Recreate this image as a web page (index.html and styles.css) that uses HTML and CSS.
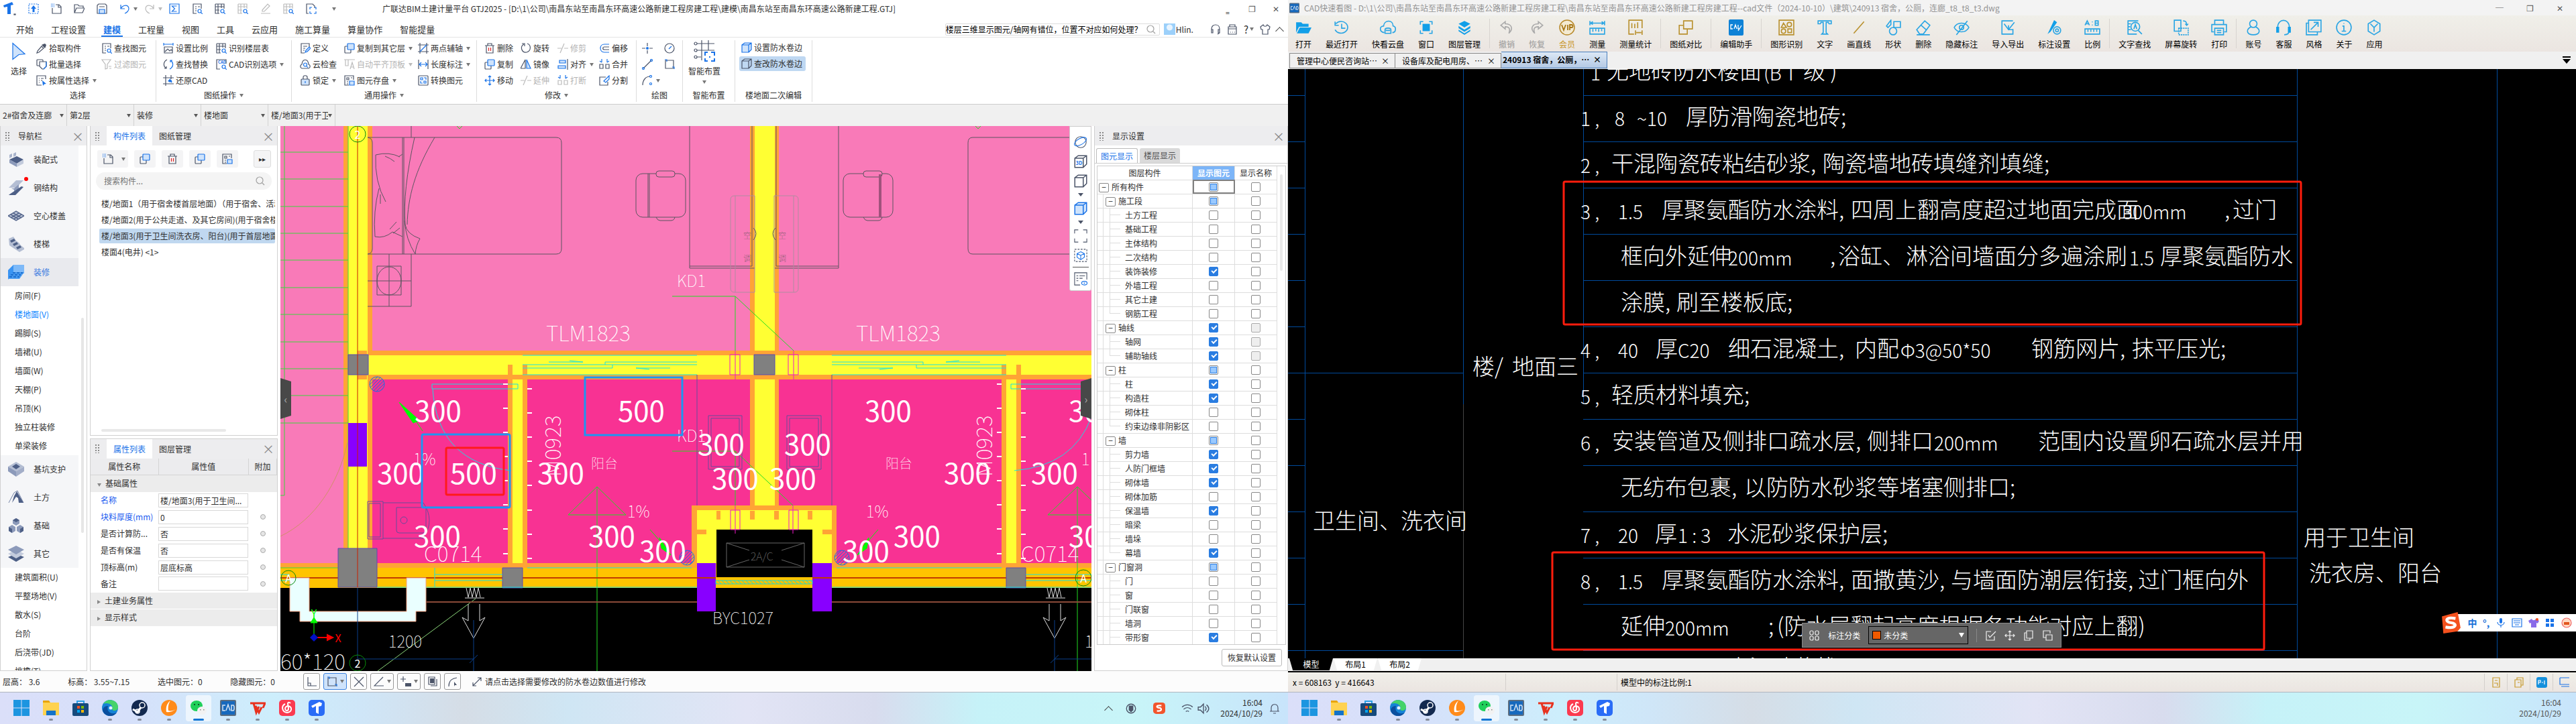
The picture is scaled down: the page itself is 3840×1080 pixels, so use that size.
FILE: index.html
```html
<!DOCTYPE html>
<html lang="zh-CN">
<head>
<meta charset="utf-8">
<title>广联达BIM土建计量平台 GTJ2025</title>
<link rel="stylesheet" href="styles.css">
</head>
<body>
<svg class="sprite" aria-hidden="true">
  <symbol id="logo" viewBox="0 0 18 20"><path class="fb" d="M0 5 13 0l2 4-4 1v13H6V7L1 8z"/><path d="M16 18h2v1h-2z"/></symbol>
  <symbol id="upload" viewBox="0 0 16 16"><path class="b" stroke-dasharray="2 1.5" d="M1 1h14v14H1z"/><path class="fb" d="M8 3l4 5H9.500v5h-3V8H4z"/></symbol>
  <symbol id="new" viewBox="0 0 16 16"><path d="M7 2h5l3 3v10H2V7M11 2v4h4"/><path class="b" stroke-dasharray="1 1" d="M0 1h5M0 3h5M0 5h5"/></symbol>
  <symbol id="open" viewBox="0 0 16 16"><path d="M1 14V2h5l2 2h6v3M1 14l3-7h12l-3 7z"/></symbol>
  <symbol id="save" viewBox="0 0 16 16"><path d="M1 3l2-2h10l2 2v12H1zM4 5h8"/><path class="b lb" d="M4 9h8v6H4z"/></symbol>
  <symbol id="undo" viewBox="0 0 16 16"><path class="b" d="M2 2v6h6M2 8c3-6 12-7 12 0 0 3-3 6-6 7"/></symbol>
  <symbol id="redo" viewBox="0 0 16 16"><path d="M14 2v6H8M14 8C11 2 2 1 2 8c0 3 3 6 6 7"/></symbol>
  <symbol id="sum" viewBox="0 0 16 16"><path class="b" d="M1 1h14v14H1zM11.500 4h-7l4 4-4 4h7"/></symbol>
  <symbol id="gridq" viewBox="0 0 16 16"><path d="M1 1h13v7M1 1v14h6M1 5h13M1 10h6M5 1v14M10 1v6"/><circle class="b" cx="11.500" cy="11.500" r="2.500"/><path class="b" d="M13.500 13.500 16 16"/></symbol>
  <symbol id="listq" viewBox="0 0 16 16"><path d="M14 8V1H2v14h5M5 5h2M5 8h2M5 11h2M9 5h3"/><circle class="b" cx="11.500" cy="11.500" r="2.500"/><path class="b" d="M13.500 13.500 16 16"/></symbol>
  <symbol id="pen" viewBox="0 0 16 16"><path d="M3 10 11 1l3 3-8 8H3zM1 15h14"/></symbol>
  <symbol id="page" viewBox="0 0 16 16"><path d="M4 15H1V1h9l3 3v3"/><path class="b" d="M6 9V6h3M13 6h2v3M15 12v3h-3M9 15H6v-3"/></symbol>
  <symbol id="pick" viewBox="0 0 16 16"><path d="M1 15l1-3 6-7 3 3-7 6z"/><path class="fd" d="M8 3l5 5 1-2 1-3-2-2-3 1z"/></symbol>
  <symbol id="batch" viewBox="0 0 16 16"><rect x="1" y="1" width="9" height="9" rx="1"/><path d="M5 4h10v7l-4 4H9l-4-4z" fill="#fff"/><path class="b" d="M15 4v7l-4 4"/></symbol>
  <symbol id="attr" viewBox="0 0 16 16"><path d="M8 15H1V1h13v5M4 5h1M7 5h4M4 8h1M7 8h2M4 11h1"/><path class="fb" d="M9 8l6 5-3 .5L10 16z"/></symbol>
  <symbol id="filter" viewBox="0 0 16 16"><path d="M1 1h13L9 8v6l-3 1V8zM11 11h4M12 14h3"/></symbol>
  <symbol id="ratio" viewBox="0 0 16 16"><path class="b" d="M1 0v4M15 0v4M1 2h14"/><path d="M2 6h12v9H2zM3 13l4-4 3 3 2-2 2 2"/></symbol>
  <symbol id="swap" viewBox="0 0 16 16"><path d="M6 1c-6 3-6 10-1 13M2 14h3v-3"/><path class="b" d="M10 15c6-3 6-10 1-13M14 2h-3v3"/></symbol>
  <symbol id="cadopt" viewBox="0 0 16 16"><path d="M6 15H1V1h14v6"/><text x="3" y="7" class="tiny">CAD</text><circle class="b" cx="11.500" cy="11.500" r="2.500"/><path class="b" d="M13.500 13.500 16 16"/></symbol>
  <symbol id="restore" viewBox="0 0 16 16"><path d="M4 0v16M0 4h16M0 13h16M12 0v6"/><path class="fb" d="M7 9l4-4v2c2 0 3 2 2 5-1-2-2-2-2-1z"/></symbol>
  <symbol id="define" viewBox="0 0 16 16"><path d="M7 15H2V1h12v5M5 5h6M5 8h3M5 11h2"/><path class="b lb" d="M8 14l1-3 5-5 2 2-5 5z"/></symbol>
  <symbol id="cloudq" viewBox="0 0 16 16"><path d="M3 14c-3-1-3-5 0-6 1-9 9-9 10 0 3 1 3 5 0 6z"/><circle class="b" cx="8" cy="8.500" r="2.500"/><path class="b" d="M10 10.500 12 13"/></symbol>
  <symbol id="lock" viewBox="0 0 16 16"><path d="M5 6V3c0-3 6-3 6 0v3"/><rect class="lb" x="2" y="6" width="12" height="9" rx="1"/><path class="b" d="M8 9v3"/></symbol>
  <symbol id="copy" viewBox="0 0 16 16"><rect x="1" y="5" width="9" height="10" rx="1"/><rect class="b lb" x="5" y="1" width="10" height="9" rx="1"/></symbol>
  <symbol id="align" viewBox="0 0 16 16"><path d="M0 1h16M2 1v9h4V1M9 15l3-10 3 10M10 12h4"/></symbol>
  <symbol id="store" viewBox="0 0 16 16"><path d="M7 15H1V1h13v6M4 4h3v3H4zM10 4h2M4 10h2M4 13h2"/><path class="b lb" d="M8 9h7v6H8z"/></symbol>
  <symbol id="axis" viewBox="0 0 16 16"><path d="M3 0v16M13 0v16M0 13h16M0 3h16"/><path class="b" d="M3 13 13 3"/></symbol>
  <symbol id="len" viewBox="0 0 16 16"><path d="M1 1v14M15 1v14"/><path class="b" d="M2 8h12M5 5 2 8l3 3M11 5l3 3-3 3"/></symbol>
  <symbol id="conv" viewBox="0 0 16 16"><rect x="1" y="1" width="14" height="14" rx="1"/><path class="b" d="M4 4h3v3H4zM9 9h3v3H9zM9 4h3v3M4 9v3h3"/></symbol>
  <symbol id="trash" viewBox="0 0 16 16"><path d="M1 4h14M5 4V1h6v3M3 4v11h10V4"/><path class="r" d="M6.500 7v5M9.500 7v5"/></symbol>
  <symbol id="rot" viewBox="0 0 16 16"><path d="M10 1c6 2 6 11-1 13C1 15-1 5 5 2M2 1h4v4"/></symbol>
  <symbol id="trim" viewBox="0 0 16 16"><path d="M0 8h6M10 8h6M4 15 10 1"/></symbol>
  <symbol id="offset" viewBox="0 0 16 16"><path class="b" d="M15 2H8C0 2 0 14 8 14h7"/><path d="M15 6H8c-3 0-3 4 0 4h7"/></symbol>
  <symbol id="mirror" viewBox="0 0 16 16"><path d="M7 1v13H0z"/><path class="b lb" d="M9 1v13h6z"/></symbol>
  <symbol id="alignr" viewBox="0 0 16 16"><path d="M15 0v16"/><path class="b lb" d="M3 2h9v4H3zM1 10h11v4H1z"/></symbol>
  <symbol id="merge" viewBox="0 0 16 16"><path class="b" d="M4 0v5M1 3l3 2M12 0v5M15 3l-3 2"/><path d="M1 8h5v6H1zM10 8h5v6h-5z"/></symbol>
  <symbol id="move" viewBox="0 0 16 16"><path class="b" d="M8 1v14M1 8h14M6 3l2-2 2 2M6 13l2 2 2-2M3 6 1 8l2 2M13 6l2 2-2 2"/></symbol>
  <symbol id="split" viewBox="0 0 16 16"><path d="M10 3H1v12h12v-5"/><path class="b" d="M7 9 15 1v5l-5 5z"/></symbol>
  <symbol id="pt" viewBox="0 0 16 16"><path d="M8 0v5M8 11v5M0 8h5M11 8h5"/><circle class="fb" cx="8" cy="8" r="2"/></symbol>
  <symbol id="circ" viewBox="0 0 16 16"><circle cx="8" cy="8" r="7"/><path class="b" d="M7 9l4-4"/></symbol>
  <symbol id="line" viewBox="0 0 16 16"><path d="M2 14 14 2"/><circle class="b" cx="2" cy="14" r="1.500"/><circle class="b" cx="14" cy="2" r="1.500"/></symbol>
  <symbol id="rect" viewBox="0 0 16 16"><path d="M2 2h12v12H2z"/><path class="b" d="M1 1h3v3M12 12h3v3"/></symbol>
  <symbol id="arc" viewBox="0 0 16 16"><path d="M1 15C1 7 6 2 12 2"/><circle class="b" cx="13" cy="2" r="1.500"/><circle class="b" cx="13" cy="13" r="1.500"/></symbol>
  <symbol id="cube" viewBox="0 0 16 16"><path d="M1 4h10v11H1zM1 4l4-3h10v10l-4 4M11 4l4-3"/></symbol>
  <symbol id="cubeb" viewBox="0 0 16 16"><path class="b lb" d="M1 4h10v11H1zM1 4l4-3h10v10l-4 4M11 4l4-3"/></symbol>
  <symbol id="head" viewBox="0 0 16 16"><path d="M2 10V7c0-8 12-8 12 0v3M2 8v5h2V8zM14 8v5h-2V8zM14 13l-3 2"/></symbol>
  <symbol id="calc" viewBox="0 0 16 16"><path d="M2 4h12v11H2zM2 7h12M4 4V1h8v3M5 12h1M8 12h1M11 12h1"/></symbol>
  <symbol id="shirt" viewBox="0 0 16 16"><path d="M5 1 1 4l1 4h2v7h8V8h2l1-4-4-3c-1 3-5 3-6 0z"/></symbol>
  <symbol id="mag" viewBox="0 0 16 16"><circle cx="7" cy="7" r="5"/><path d="M11 11l3 3"/></symbol>
  <symbol id="orbit" viewBox="0 0 22 22"><circle cx="11" cy="11" r="9"/><ellipse class="b" cx="11" cy="10" rx="11" ry="5" transform="rotate(-30 11 11)"/></symbol>
  <symbol id="full" viewBox="0 0 22 22"><path d="M1 7V1h6M15 1h6v6M21 15v6h-6M7 21H1v-6"/></symbol>
  <symbol id="sel3d" viewBox="0 0 22 22"><path stroke-dasharray="3 2" d="M1 1h20v20H1z"/><path class="b" d="M11 5l6 3v6l-6 4-6-4V8zM5 8l6 3 6-3M11 11v6"/></symbol>
  <symbol id="note" viewBox="0 0 22 22"><path d="M10 21H1V1h20v11M4 6h3M9 6h9M4 10h3M9 10h5M4 14h3"/><ellipse class="b" cx="17" cy="18" rx="4.500" ry="3"/><circle class="fb" cx="17" cy="18" r="1"/></symbol>

  <symbol id="n1" viewBox="0 0 24 24"><path fill="#a9b4cc" d="M2 5l4-2v5l-4 2zM8 3l4-2v5l-4 2z"/><path fill="#4d5f86" d="M2 12 13 7l10 5-10 6z"/><path fill="#8c9aba" d="M2 12l11 6v5L2 17z"/><path fill="#c3cbdc" d="M13 18l10-6v6l-10 5z"/></symbol>
  <symbol id="n2" viewBox="0 0 24 24"><path fill="#b4bed3" d="M1 12 12 1h11L12 12z"/><path fill="#8c9aba" d="M5 13h4l7-6v8l-7 6v-6z"/><path fill="#4d5f86" d="M2 22 20 10l3 1-12 12H1z"/></symbol>
  <symbol id="n3" viewBox="0 0 24 24"><path fill="#c3cbdc" d="M0 12 12 5l12 7-12 7z"/><path stroke="#56678c" stroke-width="1.500" fill="none" d="M0 12 12 5l12 7-12 7zM4 10l12 7M8 8l12 7M20 10 8 17M16 8 4 15"/></symbol>
  <symbol id="n4" viewBox="0 0 24 24"><path fill="#b4bed3" d="M1 4 8 1l4 6 4 3 3 4 5 4v2l-7 4L2 14z"/><path fill="#4d5f86" d="M3 7 9 4l2 3-6 3zM7 12l6-3 2 3-6 3zM12 17l6-3 2 3-6 3z"/></symbol>
  <symbol id="n5" viewBox="0 0 24 24"><path fill="#3a94f2" d="M0 9 8 1v14l-8 8z"/><path fill="#7db9f8" d="M8 1h16v13H8z"/><path fill="#4a9bf0" d="M8 12h16l-7 10H0z"/><path stroke="#1a6ed0" stroke-width="2" stroke-dasharray="4 2" d="M7 13h15M4 16h15M2 19h15"/></symbol>
  <symbol id="n6" viewBox="0 0 24 24"><path fill="#b4bed3" d="M0 8 12 1l12 7-12 7z"/><path fill="#8c9aba" d="M0 8l12 7v8L0 15z"/><path fill="#a3aec8" d="M24 8l-12 7v8l12-8z"/><path fill="#4d5f86" d="M6 8l6-4 6 4-6 4z"/></symbol>
  <symbol id="n7" viewBox="0 0 24 24"><path fill="none" stroke="#7585a8" d="M1 20 9 5l5-3 9 18"/><path fill="#4d5f86" d="M13 3l10 17h-7l-1-7-3-2-6 9 3-10z"/></symbol>
  <symbol id="n8" viewBox="0 0 24 24"><path fill="#8c9aba" d="M7 4l5-3 5 3v5l-5 3-5-3zM1 14l5-3 5 3v6l-5 3-5-3zM13 14l5-3 5 3v6l-5 3-5-3z"/><path fill="#4d5f86" d="M7 4l5 3 5-3-5-3zM1 14l5 3v6l-5-3zM23 14l-5 3v6l5-3z"/></symbol>
  <symbol id="n9" viewBox="0 0 24 24"><path fill="#4d5f86" d="M0 17l12-5 12 5-12 7z"/><path fill="#c3cbdc" d="M0 12l12-6 12 6-12 7z"/><path fill="#8c9aba" d="M0 6l12-6 12 6-12 7z"/></symbol>

  <symbol id="t1" viewBox="0 0 24 24"><path fill="#1c95e0" d="M0 0h11.500v11.500H0zM12.500 0H24v11.500H12.500zM0 12.500h11.500V24H0zM12.500 12.500H24V24H12.500z"/></symbol>
  <symbol id="t2" viewBox="0 0 24 24"><path fill="#e8a400" d="M0 1h9l2 3H0z"/><path fill="#ffd250" d="M0 4h24v19H0z"/><path fill="#1473c8" d="M5 16h14v7H5z"/></symbol>
  <symbol id="t3" viewBox="0 0 24 24"><path fill="none" stroke="#2a9fe6" stroke-width="2" d="M7 6V2h10v4"/><rect fill="#164a7c" y="5" width="24" height="19" rx="2" x="0"/><path fill="#f25022" d="M7 9h4v4H7z"/><path fill="#7fba00" d="M13 9h4v4h-4z"/><path fill="#00a4ef" d="M7 15h4v4H7z"/><path fill="#ffb900" d="M13 15h4v4h-4z"/></symbol>
  <symbol id="t4" viewBox="0 0 24 24"><circle cx="12" cy="12" r="12" fill="#1583d6"/><path fill="#45d36a" d="M2 6C8-4 25 0 24 12c-1 5-8 5-9 2 3-6-6-11-13-8z"/><path fill="#0b4f9e" d="M9 9c-3 8 5 14 13 10-6 9-20 5-21-4 1-4 4-6 8-6z"/><circle cx="13" cy="12" r="2.500" fill="#dff2fc"/></symbol>
  <symbol id="t5" viewBox="0 0 24 24"><circle cx="12" cy="12" r="12" fill="#13294f"/><path stroke="#fff" stroke-width="3" d="M2 14l7 4 6-8"/><circle cx="16" cy="8" r="4" fill="#13294f" stroke="#fff" stroke-width="1.500"/><circle cx="9" cy="17" r="3" fill="none" stroke="#fff" stroke-width="1.500"/></symbol>
  <symbol id="t6" viewBox="0 0 24 24"><circle cx="12" cy="12" r="12" fill="#ff8b1a"/><path fill="#fff" d="M14 1C8 6 7 12 8 18c4 1 10-1 14-4-3 2-8 3-11 2-1-5 0-10 3-15z"/></symbol>
  <symbol id="t7" viewBox="0 0 24 24"><ellipse cx="9" cy="9" rx="9" ry="8" fill="#1fd05a"/><ellipse cx="17" cy="16" rx="7" ry="6" fill="#f2f2f2"/><path fill="#0a5a2a" d="M5 6h2v2H5zM11 6h2v2h-2z"/><path fill="#888" d="M14 14h1.500v1.500H14zM19 14h1.500v1.500H19z"/></symbol>
  <symbol id="t8" viewBox="0 0 24 24"><rect width="24" height="24" rx="2" fill="#5b6d80"/><rect x="2" y="2" width="20" height="20" fill="#1769bd"/><path stroke="#d6e4f2" fill="none" stroke-width="1.500" d="M8 8H4v8h4M9 16l3-9 3 9M17 8v8h3l1-2v-4l-1-2z"/></symbol>
  <symbol id="t9" viewBox="0 0 24 24"><path fill="none" stroke="#e8321e" stroke-width="3" d="M1 5h5l4 14 4-9M7 5h7M9 9l5 10 4-8M13 5h10l-3 7"/></symbol>
  <symbol id="t10" viewBox="0 0 24 24"><rect width="24" height="24" rx="5" fill="#fb3a50"/><path fill="none" stroke="#fff" stroke-width="2" d="M9 6c-6 3-5 12 3 13 8-1 8-9 1-10-5 1-5 7-1 7 4-1 1-6 1-11 1-2 3-1 4 0"/></symbol>
  <symbol id="t11" viewBox="0 0 24 24"><rect width="24" height="24" rx="5" fill="#2a6cf6"/><path fill="#fff" d="M4 9l12-6 4 2-1 4-4 1v11l-4-2V9l-5 3z"/></symbol>

  <symbol id="c1" viewBox="0 0 22 22"><path class="fc" d="M1 4h7l2 2h8v4H5l-4 8zM6 11h16l-4 8H2z"/></symbol>
  <symbol id="c2" viewBox="0 0 22 22"><path class="c" d="M3 6a9 8 0 1 1-1 8M2 3v5h5M11 6v6h5"/></symbol>
  <symbol id="c3" viewBox="0 0 22 22"><path class="c" d="M6 18c-7-1-7-9-1-9 1-9 13-9 13 0 5 1 4 9-1 9M7 19v-5c0-3 8-3 8 0v5zM8 15h6"/></symbol>
  <symbol id="c4" viewBox="0 0 22 22"><path class="c" d="M3 7V3h4M15 3h4v4M19 15v4h-4M7 19H3v-4"/><path class="fc" d="M6 6h10v10H6z"/></symbol>
  <symbol id="c5" viewBox="0 0 22 22"><path class="fc" d="M11 2l8 4-8 5-8-5zM3 9l8 5 8-5v3l-8 5-8-5zM3 14l8 5 8-5v2l-8 5-8-5z"/></symbol>
  <symbol id="c6" viewBox="0 0 22 22"><path class="g" d="M9 3 3 8l6 5v-3c6 0 7 3 5 9 7-7 3-13-5-13z"/></symbol>
  <symbol id="c7" viewBox="0 0 22 22"><path class="g" d="M13 3l6 5-6 5v-3c-6 0-7 3-5 9C1 12 5 6 13 6z"/></symbol>
  <symbol id="c8" viewBox="0 0 24 24"><circle cx="12" cy="12" r="11" fill="#f3ead2" stroke="#b88a2c" stroke-width="1.500"/><path fill="none" stroke="#a87818" stroke-width="1.800" d="M4 8l3 8 3-8M13 8v8M16 16V8h3c2 0 2 4 0 4h-3"/></symbol>
  <symbol id="c9" viewBox="0 0 22 22"><path class="c" d="M1 2v6M21 2v6M2 5h18M5 3 2 5l3 2M17 3l3 2-3 2M1 12h20v8H1zM5 13v4M9 13v3M13 13v4M17 13v3"/></symbol>
  <symbol id="c10" viewBox="0 0 22 22"><path class="o" d="M9 20H2V1h18v11M6 5v7M10 6v6M14 4v8M11 15v6M20 15v6M12 18h7"/></symbol>
  <symbol id="c11" viewBox="0 0 22 22"><path class="o" d="M8 2h12v11H8zM8 8H2v12h11v-7"/></symbol>
  <symbol id="c12" viewBox="0 0 22 24"><rect width="22" height="24" rx="2" fill="#0e82d6"/><path fill="none" stroke="#fff" stroke-width="1.300" d="M6 8H3v6h3M8 14l2-6 2 6M14 8v6h2M14 17l5-8"/></symbol>
  <symbol id="c13" viewBox="0 0 22 22"><path class="o" d="M1 1h20v20H1zM7 5l4 6H4zM13 13h5v5h-5z"/><circle class="o" cx="15" cy="7" r="3"/><circle class="o" cx="7" cy="16" r="3"/></symbol>
  <symbol id="c14" viewBox="0 0 22 22"><path class="c" d="M2 6V2h18v4h-3l-1-2h-3v14l2 2H7l2-2V4H6L5 6z"/></symbol>
  <symbol id="c15" viewBox="0 0 22 22"><path class="o" d="M4 19 18 3"/></symbol>
  <symbol id="c16" viewBox="0 0 22 22"><path class="c" d="M2 9 8 1v6l-4 4zM12 3h9v8h-9z"/><circle class="c" cx="11" cy="16" r="5"/></symbol>
  <symbol id="c17" viewBox="0 0 22 22"><path class="c" d="M2 14 13 2l7 6-9 12H6zM8 8l7 6M2 21h18"/></symbol>
  <symbol id="c18" viewBox="0 0 22 22"><path class="c" d="M1 11c4-8 16-8 20 0-4 8-16 8-20 0zM19 2 4 21"/><circle class="c" cx="11" cy="11" r="3"/></symbol>
  <symbol id="c19" viewBox="0 0 22 22"><path class="c" d="M9 2H3v18h15v-7M6 6l6 8 8-10M8 2h10M12 8v6h6"/></symbol>
  <symbol id="c20" viewBox="0 0 22 22"><path class="fc" d="M4 16 11 1l4 3L6 17l-4 3z"/><circle class="c" cx="15" cy="15" r="5"/><circle class="c" cx="15" cy="15" r="2"/></symbol>
  <symbol id="c21" viewBox="0 0 22 22"><path class="c" d="M1 8 4 2l3 6M2 6h4M15 2v6h4V2zM15 5h4M11 3v1M11 7v1M1 13h20v7H1zM5 14v3M9 14v3M13 14v3M17 14v3"/></symbol>
  <symbol id="c22" viewBox="0 0 22 22"><path class="c" d="M16 2H2v18h12M2 6h4M2 10h3M2 14h4"/><circle class="c" cx="12" cy="10" r="6"/><path class="c" d="M16 15l5 5M10 13l2-6 2 6"/></symbol>
  <symbol id="c23" viewBox="0 0 22 22"><path class="c" d="M2 1h9v15H2zM14 2c4 0 5 2 5 6M17 6l2 2 2-2"/><path class="c" stroke-dasharray="2 1" d="M8 12h13v9H8z"/></symbol>
  <symbol id="c24" viewBox="0 0 22 22"><path class="c" d="M5 7V1h12v6M4 17H1V7h20v10h-3M5 12h12v9H5zM8 15h6M8 18h6"/></symbol>
  <symbol id="c25" viewBox="0 0 22 22"><circle class="c" cx="11" cy="6" r="5"/><path class="c" d="M8 10c-8 4-6 11 3 11s11-7 3-11"/></symbol>
  <symbol id="c26" viewBox="0 0 22 22"><path class="c" d="M3 11C3-2 19-2 19 11M19 15c0 4-3 6-7 6"/><path class="fc" d="M1 10h4v8H1zM17 10h4v8h-4z"/></symbol>
  <symbol id="c27" viewBox="0 0 22 22"><path class="c" d="M4 1h17v16H4zM4 5H1v16h15v-4M7 14 17 4M11 4h6v6"/></symbol>
  <symbol id="c28" viewBox="0 0 22 22"><circle class="c" cx="11" cy="11" r="10"/><path class="c" d="M9 9h2v7M8 16h6M11 5v1"/></symbol>
  <symbol id="c29" viewBox="0 0 22 22"><path class="c" d="M11 1l8 5v10l-8 5-8-5V6zM6 6l5 5 5-5M11 11v6"/></symbol>
</svg>

<main class="screens">
<section class="screen gtj">
  <header class="titlebar">
    <div class="quick">
      <svg class="i big"><use href="#logo"/></svg>
      <svg class="i"><use href="#upload"/></svg><svg class="i"><use href="#new"/></svg><svg class="i"><use href="#open"/></svg><svg class="i"><use href="#save"/></svg>
      <span class="drop"><svg class="i"><use href="#undo"/></svg></span><span class="drop off"><svg class="i"><use href="#redo"/></svg></span>
      <svg class="i"><use href="#sum"/></svg><svg class="i"><use href="#listq"/></svg><svg class="i"><use href="#gridq"/></svg>
      <svg class="i off"><use href="#gridq"/></svg><svg class="i off"><use href="#pen"/></svg><svg class="i off"><use href="#gridq"/></svg><svg class="i"><use href="#page"/></svg><span class="drop"></span>
    </div>
    <h1>广联达BIM土建计量平台 GTJ2025 - [D:\1\公司\南昌东站至南昌东环高速公路新建工程房建工程\建模\南昌东站至南昌东环高速公路新建工程.GTJ]</h1>
    <div class="winctl"><button>‗</button><button>❐</button><button>✕</button></div>
  </header>
  <nav class="menu">
    <a href="#">开始</a><a href="#">工程设置</a><a href="#" class="on">建模</a><a href="#">工程量</a><a href="#">视图</a><a href="#">工具</a><a href="#">云应用</a><a href="#">施工算量</a><a href="#">算量协作</a><a href="#">智能提量</a>
    <div class="account">
      <label class="ask"><input type="text" aria-label="搜索" value="楼层三维显示图元/轴网有错位，位置不对应如何处理？"><svg class="i lite"><use href="#mag"/></svg></label>
      <span class="avatar"></span><span class="user">Hlin.</span>
      <svg class="i"><use href="#head"/></svg><svg class="i"><use href="#calc"/></svg><span class="drop">?</span><svg class="i"><use href="#shirt"/></svg><span class="up"></span>
    </div>
  </nav>
  <div class="ribbon">
    <section class="grp g1"><div class="cols">
      <button class="large"><svg class="i cursor" viewBox="0 0 20 26"><path class="b lb" d="M1 1l18 16-9 1-9 7z"/></svg>选择</button>
      <div class="col"><button><svg class="i"><use href="#pick"/></svg>拾取构件</button><button><svg class="i"><use href="#batch"/></svg>批量选择</button><button class="drop"><svg class="i"><use href="#attr"/></svg>按属性选择</button></div>
      <div class="col"><button><svg class="i"><use href="#listq"/></svg>查找图元</button><button class="off"><svg class="i"><use href="#filter"/></svg>过滤图元</button></div>
    </div><h2>选择</h2></section>
    <section class="grp g2"><div class="cols">
      <div class="col"><button><svg class="i"><use href="#ratio"/></svg>设置比例</button><button><svg class="i"><use href="#swap"/></svg>查找替换</button><button><svg class="i"><use href="#restore"/></svg>还原CAD</button></div>
      <div class="col"><button><svg class="i"><use href="#gridq"/></svg>识别楼层表</button><button class="drop"><svg class="i"><use href="#cadopt"/></svg>CAD识别选项</button></div>
    </div><h2 class="drop">图纸操作</h2></section>
    <section class="grp g3"><div class="cols">
      <div class="col"><button><svg class="i"><use href="#define"/></svg>定义</button><button><svg class="i"><use href="#cloudq"/></svg>云检查</button><button class="drop"><svg class="i"><use href="#lock"/></svg>锁定</button></div>
      <div class="col"><button class="drop"><svg class="i"><use href="#copy"/></svg>复制到其它层</button><button class="drop off"><svg class="i"><use href="#align"/></svg>自动平齐顶板</button><button class="drop"><svg class="i"><use href="#store"/></svg>图元存盘</button></div>
      <div class="col"><button class="drop"><svg class="i"><use href="#axis"/></svg>两点辅轴</button><button class="drop"><svg class="i"><use href="#len"/></svg>长度标注</button><button><svg class="i"><use href="#conv"/></svg>转换图元</button></div>
    </div><h2 class="drop">通用操作</h2></section>
    <section class="grp g4"><div class="cols">
      <div class="col"><button><svg class="i"><use href="#trash"/></svg>删除</button><button><svg class="i"><use href="#copy"/></svg>复制</button><button><svg class="i"><use href="#move"/></svg>移动</button></div>
      <div class="col"><button><svg class="i"><use href="#rot"/></svg>旋转</button><button><svg class="i"><use href="#mirror"/></svg>镜像</button><button class="off"><svg class="i"><use href="#trim"/></svg>延伸</button></div>
      <div class="col"><button class="off"><svg class="i"><use href="#trim"/></svg>修剪</button><button class="drop"><svg class="i"><use href="#alignr"/></svg>对齐</button><button class="off"><svg class="i"><use href="#merge"/></svg>打断</button></div>
      <div class="col"><button><svg class="i"><use href="#offset"/></svg>偏移</button><button><svg class="i"><use href="#merge"/></svg>合并</button><button><svg class="i"><use href="#split"/></svg>分割</button></div>
    </div><h2 class="drop">修改</h2></section>
    <section class="grp g5"><div class="cols">
      <div class="col"><button aria-label="点"><svg class="i"><use href="#pt"/></svg></button><button aria-label="直线"><svg class="i"><use href="#line"/></svg></button><button aria-label="弧" class="drop"><svg class="i"><use href="#arc"/></svg></button></div>
      <div class="col"><button aria-label="圆"><svg class="i"><use href="#circ"/></svg></button><button aria-label="矩形"><svg class="i"><use href="#rect"/></svg></button></div>
    </div><h2>绘图</h2></section>
    <section class="grp g6"><div class="cols">
      <button class="large drop"><svg class="i smart" viewBox="0 0 32 32"><path d="M5 5h26M5 15h26M5 25h6M12 0v30M22 0v15"/><circle cx="3" cy="5" r="2"/><circle cx="3" cy="15" r="2"/><circle cx="3" cy="25" r="2"/><path class="b" stroke-width="2" d="M17 23v-5h4M26 18h5v5M31 27v4h-5M21 31h-4v-4M23 25h2"/></svg>智能布置</button>
    </div><h2>智能布置</h2></section>
    <section class="grp g7"><div class="cols">
      <div class="col"><button><svg class="i"><use href="#cubeb"/></svg>设置防水卷边</button><button class="sel"><svg class="i"><use href="#cube"/></svg>查改防水卷边</button></div>
    </div><h2>楼地面二次编辑</h2></section>
  </div>
  <div class="pickers">
    <label class="drop"><select aria-label="单体"><option>2#宿舍及连廊</option></select></label>
    <label class="drop"><select aria-label="楼层"><option>第2层</option></select></label>
    <label class="drop"><select aria-label="类别"><option>装修</option></select></label>
    <label class="drop"><select aria-label="构件类型"><option>楼地面</option></select></label>
    <label class="drop"><select aria-label="构件"><option>楼/地面3(用于卫</option></select></label>
  </div>
  <div class="work">
    <aside class="panel nav">
      <header class="phead"><i class="grip"></i><b>导航栏</b><button class="x" aria-label="关闭">×</button></header>
      <div class="navlist">
        <a class="cat" href="#"><svg><use href="#n1"/></svg>装配式</a>
        <a class="cat new" href="#"><svg><use href="#n2"/></svg>钢结构</a>
        <a class="cat" href="#"><svg><use href="#n3"/></svg>空心楼盖</a>
        <a class="cat" href="#"><svg><use href="#n4"/></svg>楼梯</a>
        <a class="cat on" href="#"><svg><use href="#n5"/></svg>装修</a>
        <a href="#">房间(F)</a><a href="#" class="cur">楼地面(V)</a><a href="#">踢脚(S)</a><a href="#">墙裙(U)</a><a href="#">墙面(W)</a><a href="#">天棚(P)</a><a href="#">吊顶(K)</a><a href="#">独立柱装修</a><a href="#">单梁装修</a>
        <a class="cat" href="#"><svg><use href="#n6"/></svg>基坑支护</a>
        <a class="cat" href="#"><svg><use href="#n7"/></svg>土方</a>
        <a class="cat" href="#"><svg><use href="#n8"/></svg>基础</a>
        <a class="cat" href="#"><svg><use href="#n9"/></svg>其它</a>
        <a href="#">建筑面积(U)</a><a href="#">平整场地(V)</a><a href="#">散水(S)</a><a href="#">台阶</a><a href="#">后浇带(JD)</a><a href="#">挑檐(T)</a>
      </div>
      <i class="vbar"></i>
    </aside>
    <div class="stack">
      <section class="panel list">
        <header class="phead"><i class="grip"></i><a href="#" class="tab on">构件列表</a><a href="#" class="tab">图纸管理</a><button class="x" aria-label="关闭">×</button></header>
        <div class="tools"><button class="split drop" aria-label="新建"><svg class="i"><use href="#new"/></svg></button><button aria-label="复制"><svg class="i"><use href="#copy"/></svg></button><button aria-label="删除"><svg class="i"><use href="#trash"/></svg></button><button aria-label="层间复制"><svg class="i"><use href="#copy"/></svg></button><button aria-label="存盘"><svg class="i"><use href="#store"/></svg></button><button class="more">▸▸</button></div>
        <label class="find"><input type="text" aria-label="搜索构件" placeholder="搜索构件..."><svg class="i lite"><use href="#mag"/></svg></label>
        <ul><li>楼/地面1（用于宿舍楼首层地面）（用于宿舍、活动室）</li><li>楼/地面2(用于公共走道、及其它房间)(用于宿舍楼及连廊)</li><li class="sel">楼/地面3(用于卫生间洗衣房、阳台)(用于首层地面以上)</li><li>楼面4(电井) &lt;1&gt;</li></ul>
        <i class="hbar"></i>
      </section>
      <section class="panel props">
        <header class="phead"><i class="grip"></i><a href="#" class="tab on">属性列表</a><a href="#" class="tab">图层管理</a><button class="x" aria-label="关闭">×</button></header>
        <table>
          <thead><tr><th class="w1">属性名称</th><th>属性值</th><th class="w3">附加</th></tr></thead>
          <tbody>
            <tr class="sec open"><td colspan="3">基础属性</td></tr>
            <tr class="blue"><td><label for="p1">名称</label></td><td><input id="p1" type="text" value="楼/地面3(用于卫生间..."></td><td></td></tr>
            <tr class="blue"><td><label for="p2">块料厚度(mm)</label></td><td><input id="p2" type="text" value="0"></td><td><i class="dot"></i></td></tr>
            <tr><td><label for="p3">是否计算防...</label></td><td><input id="p3" type="text" value="否"></td><td><i class="dot"></i></td></tr>
            <tr><td><label for="p4">是否有保温</label></td><td><input id="p4" type="text" value="否"></td><td><i class="dot"></i></td></tr>
            <tr><td><label for="p5">顶标高(m)</label></td><td><input id="p5" type="text" value="层底标高"></td><td><i class="dot"></i></td></tr>
            <tr><td><label for="p6">备注</label></td><td><input id="p6" type="text" value=""></td><td><i class="dot"></i></td></tr>
            <tr class="sec"><td colspan="3">土建业务属性</td></tr>
            <tr class="sec"><td colspan="3">显示样式</td></tr>
          </tbody>
        </table>
      </section>
    </div>
    <div class="canvas">
      <svg class="plan" aria-label="平面图">
        <defs>
          <pattern id="hatch" width="5" height="5" patternUnits="userSpaceOnUse"><path d="M0 5 5 0" stroke="#1a6fe0"/></pattern>
          <pattern id="hatch2" width="6" height="6" patternUnits="userSpaceOnUse"><path d="M0 0 6 6" stroke="#19d8d0"/></pattern>
          <g id="drain"><path d="M-11 0l3 14 3-14 3 14 3-14 3 14 3-14 3 14M-13 15h29" stroke="#ddd"/><path d="M-8 24v25l-9-5 17 31 17-31-8 5V24" stroke="#ddd"/><path d="M0 48v76" stroke="#0a3f8a"/></g>
          <g id="chair"><rect x="948" y="259" width="74" height="65" rx="10"/><rect x="978" y="255" width="28" height="9" rx="4" fill="#f97ab8"/><path d="M978 324q2 5 6 5h16q5 0 6-5"/></g>
        </defs>
        <g transform="translate(-418 -188)">
          <rect x="418" y="188" width="1209" height="659" fill="#f97ab8"/>
          <path fill="#f83293" d="M555 566h563v274H555zM1161 566h466v274h-466z"/>
          <path fill="#000" d="M418 877h1209v124H418z"/>
          <path fill="#ffa435" d="M512 188h43v659h-43zM418 840h621v7H418zM1240 840h387v7h-387zM555 523h1072v43H555zM757 559h29v288h-29zM1118 188h43v573h-43zM1493 559h29v288h-29zM1031 754h216v106h-216z"/>
          <path fill="#ffc400" d="M418 847h1209v30H418z"/>
          <path fill="#ffff33" d="M519 188h29v630h-29zM548 530h1079v29H548zM764 559h15v281h-15zM1125 188h30v573h-30zM1500 559h15v281h-15zM1039 761h201v79h-201z"/>
          <path fill="#ffa435" d="M1068 762h6v13h-6zM1118 762h7v13h-7zM1154 762h7v13h-7zM1204 762h7v13h-7zM1039 790h14v7h-14zM1226 790h14v7h-14zM1125 523h30v43h-30zM1125 754h30v7h-30zM533 523h14v43h-14zM764 559h15v7h-15zM1500 559h15v7h-15zM757 544h7v15h-7zM779 544h7v15h-7zM1493 544h7v15h-7zM1515 544h7v15h-7z"/>
          <path fill="#000" d="M1068 790h143v71h-143z"/>
          <g fill="none" stroke="#22dd22">
            <path stroke="#3cd63c" d="M418 227h101M418 267h101M418 308h101M418 348h101M418 388h101M418 429h101M418 469h101M418 510h101M418 550h101M418 590h101M418 631h101M424 188v551h-6M519 188v659H418"/>
            <path d="M1002 442h94v81M1096 442l87 81M1002 673h94v81M1096 673l86 81M890 1001V726l-43 42h86l-43-42M1606 1001V726l-44 42h65M1606 726l21 20"/>
            <path stroke="#8bd67a" d="M563 1001 709 893"/>
            <path d="M681 188l4 4 4-4M1454 188l4 4 4-4"/>
          </g>
          <path fill="none" stroke="#d0906a" d="M518 660C505 720 470 775 418 800"/>
          <path fill="#8800ff" d="M519 631h28v65h-28zM1039 840h28v72h-28zM1211 840h29v72h-29z"/>
          <path stroke="#c03c00" stroke-width="2" d="M418 862h649M1211 862h416"/>
          <path stroke="#c81e00" d="M533 188v684" />
          <g fill="#808080" stroke="#5a4ab0"><path d="M519 529h30v30h-30zM504 818h58v58h-58zM1124 529h31v30h-31zM749 847h30v30h-30zM1500 847h29v30h-29z"/></g>
          <path stroke="#c81e00" d="M533 529v30M533 818v58"/>
          <g fill="none" stroke="#19e0e0">
            <path d="M779 530h260M779 559h260M779 544h260M779 549h134v-5M902 544v-4h137M818 540h51l-20-2M999 549h-51l20 2"/>
            <path d="M1240 530h260M1240 559h260M1240 544h260M1240 540h136v4M1366 544v5h134M1461 540h-51l20-2M1280 549h51l-20 2"/>
            <path d="M644 580v-7h128v7zM645 580Q652 690 762 702M1627 573h-120v7h120M1627 622Q1600 695 1512 702"/>
            <path d="M648 847v29M648 857h101M648 866h101M1529 857h98M1529 866h98M562 876h477M1240 876h387M786 847h245M1247 847h246M418 857h14M418 866h14"/>
          </g>
          <path fill="url(#hatch2)" stroke="#19d8d0" d="M1067 866h144v5h-144z"/>
          <path fill="#eaffff" stroke="#f0a080" d="M432 862h29v50h145v-50h29v50h-15v15H447v-15h-15z"/>
          <path stroke="#8a4a38" stroke-width="2" d="M635 898h404M1240 898h387"/>
          <use href="#drain" x="706" y="877" fill="none"/><use href="#drain" x="1572" y="877" fill="none"/>
          <path stroke="#0a3f8a" fill="none" d="M533 877v106h173M1572 983h55M700 989l12-12M1566 989l12-12"/>
          <g fill="none" stroke="#5d5560">
            <path d="M548 205h281q8 0 8 8v158q0 8-8 8H548M548 205q7 1 7 8v158q0 7-7 8M600 205v174M602 205v174M613 188v17M613 379v78h-65M580 379v78M548 419h65"/>
            <path d="M562 397h36v43h-36z"/><ellipse cx="580" cy="419" rx="18" ry="21"/>
            <path d="M560 231q20-5 36 3M560 231q-2 40 15 70M565 281q-9 34-6 72 14 3 26-7l15 7M567 290v14M594 234l6-4M574 233q8 3 14 8M586 348l10-8M581 342l10-11M618 205q-18 80-14 130 2 14 22 21-6 10-7 23-14-22-16-50M648 205c-30 50-40 90-41 130"/>
            <use href="#chair"/><path d="M966 259v65M968 259v65"/>
            <g transform="translate(309)"><use href="#chair"/></g><path stroke="#a0527c" stroke-width="4" d="M1312 260v64"/>
            <path d="M1028 188v212h97M1028 397h93V188M1250 188v212h-95M1250 397h-93V188M1594 205h-144q-7 0-7 8v158q0 8 7 8h144"/>
            <path stroke="#b08ca0" d="M1125 292h-30q-6 0-6 6v132q0 6 6 6h30zM1096 292v144M1154 292h30q6 0 6 6v132q0 6-6 6h-30zM1183 292v144"/>
            <path stroke="#6b4a9a" d="M1056 620h50v80h-50zM1060 624h42v72h-42zM1173 620h51v80h-51zM1177 624h43v72h-43zM1039 559v195M1240 559v195M548 748h23v56h-23zM550 751h17v50h-17zM571 750h60q18 26 0 53h-60M591 757h44v38h-40q-4 0-4-4z"/><circle cx="602" cy="776" r="5" stroke="#6b4a9a"/>
            <path d="M1123 340q8 8 0 18M1156 340q-8 8 0 18"/>
          </g>
          <g fill="none" stroke="#f018c8"><path d="M1096 523v43M1183 523v43M1088 529h15v30h-15zM1175 529h15v30h-15zM1096 754v42M1182 754v42M1089 761h14v29h-14zM1176 761h14v29h-14z"/></g>
          <path stroke="#fff" stroke-width="2" d="M750 573h7M750 609h7M750 645h7M750 681h7M750 717h7M750 753h7M750 789h7M750 826h7M786 580h7M786 616h7M786 652h7M786 688h7M786 724h7M786 761h7M786 797h7M786 833h7M1486 573h7M1486 609h7M1486 645h7M1486 681h7M1486 717h7M1486 753h7M1486 789h7M1486 826h7M1522 580h7M1522 616h7M1522 652h7M1522 688h7M1522 724h7M1522 761h7M1522 797h7M1522 833h7"/>
          <g fill="url(#hatch)" stroke="#1a6fe0"><circle cx="562" cy="573" r="11"/><circle cx="1024" cy="832" r="11"/><circle cx="1255" cy="832" r="11"/></g>
          <g fill="#0f0" stroke="#0f0"><path d="M595 600l30 27-9 4zM620 628l10 15M969 790l14 16M983 802l17 26-14-10zM1309 790l-14 16M1295 802l-17 26 14-10z"/></g>
          <path fill="none" stroke="#666" d="M1083 810h116v36h-116zM1083 810l34 11M1199 810l-34 11M1083 846l34-11M1199 846l-34-11"/>
          <g class="thin">
            <text x="814" y="495" class="t32">TLM1823</text><text x="1276" y="495" class="t32">TLM1823</text>
            <text x="1009" y="417" class="t24">KD1</text><text x="1009" y="648" class="t24">KD1</text>
            <text x="632" y="824" class="t32">C0714</text><text x="1522" y="824" class="t32">C0714</text>
            <text x="616" y="683" class="t24">1%</text><text x="935" y="761" class="t24">1%</text><text x="1291" y="761" class="t24">1%</text><text x="1612" y="683" class="t24">1</text>
            <text x="881" y="690" class="t20">阳台</text><text x="1320" y="690" class="t20">阳台</text>
            <text class="t32" transform="translate(822 711) rotate(-90)">M0923</text><text class="t32" transform="translate(1465 711) rotate(-90)">M0923</text>
            <text x="1062" y="920" class="t24">BYC1027</text><text x="579" y="955" class="t24">1200</text><text x="418" y="985" class="t32">60*120</text><text x="1617" y="955" class="t24">1</text>
            <text x="1119" y="829" class="t16 dim">2A/C</text>
            <text x="1108" y="350" class="t12 dark">空</text><text x="1108" y="384" class="t12 dark">调</text><text x="1160" y="350" class="t12 dark">空</text><text x="1160" y="384" class="t12 dark">调</text>
          </g>
          <g class="dims">
            <text x="618" y="610">300</text><text x="921" y="610">500</text><text x="1289" y="610">300</text><text x="1593" y="610">300</text>
            <text x="1040" y="660">300</text><text x="1169" y="660">300</text><text x="1061" y="711">300</text><text x="1147" y="711">300</text>
            <text x="562" y="703">300</text><text x="671" y="703">500</text><text x="801" y="703">300</text><text x="1407" y="703">300</text><text x="1537" y="703">300</text>
            <text x="617" y="797">300</text><text x="877" y="797">300</text><text x="1332" y="797">300</text><text x="1593" y="797">300</text>
            <text x="953" y="819">300</text><text x="1256" y="819">300</text>
          </g>
          <g fill="none" stroke="#1d96f2" stroke-width="3"><rect x="872" y="563" width="145" height="86"/><rect x="629" y="648" width="131" height="109" rx="2"/><rect x="665" y="668" width="86" height="70" stroke="#ff1a1a" rx="2"/></g>
          <g fill="none" stroke="#0a8a0a"><circle cx="533" cy="200" r="12"/><circle cx="533" cy="989" r="12"/><circle cx="430" cy="862" r="11"/><circle cx="1615" cy="862" r="12"/></g>
          <g class="axis"><text x="533" y="200">2</text><text x="533" y="989">2</text><text x="430" y="862">A</text><text x="1615" y="862">A</text><text x="504" y="951" fill="#f00">X</text><text x="468" y="914" fill="#0f0">Y</text></g>
          <path fill="#0f0" stroke="#0f0" d="M468 951v-22h-5l5-8 5 8h-5"/><path fill="#f00" stroke="#f00" stroke-width="2" d="M468 951h20v-4l8 4-8 4v-4"/><path fill="#0010c8" d="M462 951l6-6 6 6-6 6z"/>
        </g>
      </svg>
      <button class="flap left" aria-label="收起左侧">‹</button><button class="flap right" aria-label="收起右侧">›</button>
      <div class="views">
        <svg class="i"><use href="#orbit"/></svg>
        <svg class="i" viewBox="0 0 16 16"><use href="#cube"/><text x="2" y="12" class="tiny">3D</text></svg>
        <svg class="i"><use href="#cube"/></svg><i class="tri"></i><svg class="i"><use href="#cubeb"/></svg><i class="tri"></i>
        <svg class="i"><use href="#full"/></svg><svg class="i"><use href="#sel3d"/></svg><hr><svg class="i"><use href="#note"/></svg>
      </div>
    </div>
    <aside class="panel display">
      <header class="phead"><i class="grip"></i><b>显示设置</b><button class="x" aria-label="关闭">×</button></header>
      <div class="dtabs"><button class="on">图元显示</button><button>楼层显示</button></div>
      <div class="treebox">
      <table class="tree">
        <thead><tr><th>图层构件</th><th class="w">显示图元</th><th class="w">显示名称</th></tr></thead>
        <tbody>
        <tr class="l0"><td>所有构件</td><td class="focus"><input type="checkbox" class="part" aria-label="所有构件图元"></td><td><input type="checkbox" aria-label="所有构件名称"></td></tr>
        <tr class="l1"><td>施工段</td><td><input type="checkbox" class="part" aria-label="施工段图元"></td><td><input type="checkbox" aria-label="施工段名称"></td></tr>
        <tr><td>土方工程</td><td><input type="checkbox" aria-label="土方工程图元"></td><td><input type="checkbox" aria-label="土方工程名称"></td></tr>
        <tr><td>基础工程</td><td><input type="checkbox" aria-label="基础工程图元"></td><td><input type="checkbox" aria-label="基础工程名称"></td></tr>
        <tr><td>主体结构</td><td><input type="checkbox" aria-label="主体结构图元"></td><td><input type="checkbox" aria-label="主体结构名称"></td></tr>
        <tr><td>二次结构</td><td><input type="checkbox" aria-label="二次结构图元"></td><td><input type="checkbox" aria-label="二次结构名称"></td></tr>
        <tr><td>装饰装修</td><td><input type="checkbox" checked aria-label="装饰装修图元"></td><td><input type="checkbox" aria-label="装饰装修名称"></td></tr>
        <tr><td>外墙工程</td><td><input type="checkbox" aria-label="外墙工程图元"></td><td><input type="checkbox" aria-label="外墙工程名称"></td></tr>
        <tr><td>其它土建</td><td><input type="checkbox" aria-label="其它土建图元"></td><td><input type="checkbox" aria-label="其它土建名称"></td></tr>
        <tr class="last"><td>钢筋工程</td><td><input type="checkbox" aria-label="钢筋工程图元"></td><td><input type="checkbox" aria-label="钢筋工程名称"></td></tr>
        <tr class="l1"><td>轴线</td><td><input type="checkbox" checked aria-label="轴线图元"></td><td><input type="checkbox" disabled aria-label="轴线名称"></td></tr>
        <tr><td>轴网</td><td><input type="checkbox" checked aria-label="轴网图元"></td><td><input type="checkbox" disabled aria-label="轴网名称"></td></tr>
        <tr class="last"><td>辅助轴线</td><td><input type="checkbox" checked aria-label="辅助轴线图元"></td><td><input type="checkbox" disabled aria-label="辅助轴线名称"></td></tr>
        <tr class="l1"><td>柱</td><td><input type="checkbox" class="part" aria-label="柱类图元"></td><td><input type="checkbox" aria-label="柱类名称"></td></tr>
        <tr><td>柱</td><td><input type="checkbox" checked aria-label="柱图元"></td><td><input type="checkbox" aria-label="柱名称"></td></tr>
        <tr><td>构造柱</td><td><input type="checkbox" checked aria-label="构造柱图元"></td><td><input type="checkbox" aria-label="构造柱名称"></td></tr>
        <tr><td>砌体柱</td><td><input type="checkbox" aria-label="砌体柱图元"></td><td><input type="checkbox" aria-label="砌体柱名称"></td></tr>
        <tr class="last"><td>约束边缘非阴影区</td><td><input type="checkbox" aria-label="约束边缘非阴影区图元"></td><td><input type="checkbox" aria-label="约束边缘非阴影区名称"></td></tr>
        <tr class="l1"><td>墙</td><td><input type="checkbox" class="part" aria-label="墙图元"></td><td><input type="checkbox" aria-label="墙名称"></td></tr>
        <tr><td>剪力墙</td><td><input type="checkbox" checked aria-label="剪力墙图元"></td><td><input type="checkbox" aria-label="剪力墙名称"></td></tr>
        <tr><td>人防门框墙</td><td><input type="checkbox" checked aria-label="人防门框墙图元"></td><td><input type="checkbox" aria-label="人防门框墙名称"></td></tr>
        <tr><td>砌体墙</td><td><input type="checkbox" checked aria-label="砌体墙图元"></td><td><input type="checkbox" aria-label="砌体墙名称"></td></tr>
        <tr><td>砌体加筋</td><td><input type="checkbox" aria-label="砌体加筋图元"></td><td><input type="checkbox" aria-label="砌体加筋名称"></td></tr>
        <tr><td>保温墙</td><td><input type="checkbox" checked aria-label="保温墙图元"></td><td><input type="checkbox" aria-label="保温墙名称"></td></tr>
        <tr><td>暗梁</td><td><input type="checkbox" aria-label="暗梁图元"></td><td><input type="checkbox" aria-label="暗梁名称"></td></tr>
        <tr><td>墙垛</td><td><input type="checkbox" aria-label="墙垛图元"></td><td><input type="checkbox" aria-label="墙垛名称"></td></tr>
        <tr class="last"><td>幕墙</td><td><input type="checkbox" checked aria-label="幕墙图元"></td><td><input type="checkbox" aria-label="幕墙名称"></td></tr>
        <tr class="l1"><td>门窗洞</td><td><input type="checkbox" class="part" aria-label="门窗洞图元"></td><td><input type="checkbox" aria-label="门窗洞名称"></td></tr>
        <tr><td>门</td><td><input type="checkbox" aria-label="门图元"></td><td><input type="checkbox" aria-label="门名称"></td></tr>
        <tr><td>窗</td><td><input type="checkbox" aria-label="窗图元"></td><td><input type="checkbox" aria-label="窗名称"></td></tr>
        <tr><td>门联窗</td><td><input type="checkbox" aria-label="门联窗图元"></td><td><input type="checkbox" aria-label="门联窗名称"></td></tr>
        <tr><td>墙洞</td><td><input type="checkbox" aria-label="墙洞图元"></td><td><input type="checkbox" aria-label="墙洞名称"></td></tr>
        <tr><td>带形窗</td><td><input type="checkbox" checked aria-label="带形窗图元"></td><td><input type="checkbox" aria-label="带形窗名称"></td></tr>
        </tbody>
      </table>
      </div>
      <div class="foot"><button>恢复默认设置</button></div>
    </aside>
  </div>
  <footer class="status">
    <div class="facts"><span>层高： 3.6</span><span>标高： 3.55~7.15</span><span>选中图元：0</span><span>隐藏图元：0</span></div>
    <div class="snap"><button aria-label="正交"><svg class="i" viewBox="0 0 16 16"><path d="M2 1v13h13M2 10h4v4"/></svg></button><button class="wide drop on" aria-label="捕捉"><svg class="i"><use href="#rect"/></svg></button><button aria-label="交点"><svg class="i" viewBox="0 0 16 16"><path d="M1 1l14 14M15 1 1 15"/></svg></button><button class="wide drop" aria-label="角度"><svg class="i" viewBox="0 0 16 16"><path d="M14 1 1 14h14"/></svg></button><button class="wide drop" aria-label="输入"><svg class="i" viewBox="0 0 16 16"><path d="M0 4h8M4 0v8"/><path class="fd" d="M7 10h9v5H7z"/></svg></button><button aria-label="图层"><svg class="i" viewBox="0 0 16 16"><path d="M2 1h9v11H2zM5 14h9V4"/><path class="fd" d="M4 3h6v7H4z"/></svg></button><button aria-label="曲线"><svg class="i" viewBox="0 0 16 16"><path d="M2 15C2 5 8 3 14 2"/><path class="fd" d="M10 8l4 5h-3l-1 2z"/></svg></button></div>
    <svg class="i" viewBox="0 0 16 16"><path d="M2 14 14 2M9 2h5v5M2 9v5h5"/></svg><span>请点击选择需要修改的防水卷边数值进行修改</span>
  </footer>
  <footer class="taskbar">
    <div class="apps"><a href="#" class="idle"><svg><use href="#t1"/></svg></a><a href="#"><svg><use href="#t2"/></svg></a><a href="#" class="idle"><svg><use href="#t3"/></svg></a><a href="#"><svg><use href="#t4"/></svg></a><a href="#"><svg><use href="#t5"/></svg></a><a href="#"><svg><use href="#t6"/></svg></a><a href="#" class="on"><svg><use href="#t7"/></svg></a><a href="#"><svg><use href="#t8"/></svg></a><a href="#"><svg><use href="#t9"/></svg></a><a href="#"><svg><use href="#t10"/></svg></a><a href="#"><svg><use href="#t11"/></svg></a></div>
    <div class="tray"><span class="up"></span><svg class="i" viewBox="0 0 16 16"><circle cx="8" cy="8" r="6"/><path class="fd" d="M5 4h6v6l-3 3-3-3z"/></svg><svg class="i sg" viewBox="0 0 16 16"><rect width="16" height="15" rx="4" fill="#f2552c"/><path stroke="#fff" stroke-width="2" d="M11 4c-8-1-7 3-3 3s4 5-3 4"/></svg><svg class="i" viewBox="0 0 16 16"><path d="M1 6c4-4 10-4 14 0M3 9c3-3 7-3 10 0M6 12c1-1 3-1 4 0"/></svg><svg class="i" viewBox="0 0 16 16"><path d="M1 6h3l4-4v12l-4-4H1zM10 5c2 2 2 4 0 6M12 3c4 3 4 7 0 10"/></svg></div>
    <time>16:04<br>2024/10/29</time><svg class="i bell" viewBox="0 0 16 16"><path d="M3 12V7c0-7 10-7 10 0v5zM1 12h14M6 15h4"/></svg>
  </footer>
</section>

<section class="screen cad">
  <header class="titlebar"><svg class="capp"><use href="#t8"/></svg><h1>CAD快速看图 - D:\1\公司\南昌东站至南昌东环高速公路新建工程房建工程\南昌东站至南昌东环高速公路新建工程房建工程--cad文件（2024-10-10）\建筑\240913 宿舍，公厕，连廊_t8_t8_t3.dwg</h1><div class="winctl"><button>─</button><button>❐</button><button>✕</button></div></header>
  <div class="cbar">
    <button><svg><use href="#c1"/></svg>打开</button><button><svg><use href="#c2"/></svg>最近打开</button><button><svg><use href="#c3"/></svg>快看云盘</button><button><svg><use href="#c4"/></svg>窗口</button><button><svg><use href="#c5"/></svg>图层管理</button><i></i>
    <button class="off"><svg><use href="#c6"/></svg>撤销</button><button class="off"><svg><use href="#c7"/></svg>恢复</button><button class="gold"><svg><use href="#c8"/></svg>会员</button><button><svg><use href="#c9"/></svg>测量</button><button><svg><use href="#c10"/></svg>测量统计</button><i></i>
    <button><svg><use href="#c11"/></svg>图纸对比</button><i></i><button><svg><use href="#c12"/></svg>编辑助手</button><i></i>
    <button><svg><use href="#c13"/></svg>图形识别</button><button><svg><use href="#c14"/></svg>文字</button><button><svg><use href="#c15"/></svg>画直线</button><button><svg><use href="#c16"/></svg>形状</button><button><svg><use href="#c17"/></svg>删除</button><button><svg><use href="#c18"/></svg>隐藏标注</button><button><svg><use href="#c19"/></svg>导入导出</button><button><svg><use href="#c20"/></svg>标注设置</button><button><svg><use href="#c21"/></svg>比例</button><i></i>
    <button><svg><use href="#c22"/></svg>文字查找</button><button><svg><use href="#c23"/></svg>屏幕旋转</button><button><svg><use href="#c24"/></svg>打印</button><i></i>
    <button><svg><use href="#c25"/></svg>账号</button><button><svg><use href="#c26"/></svg>客服</button><button><svg><use href="#c27"/></svg>风格</button><button><svg><use href="#c28"/></svg>关于</button><button><svg><use href="#c29"/></svg>应用</button>
  </div>
  <nav class="files"><a href="#"><span>管理中心便民咨询站…</span>×</a><a href="#"><span>设备库及配电用房、…</span>×</a><a href="#" class="on"><span>240913 宿舍，公厕，…</span>×</a><b class="fmenu"></b></nav>
  <div class="canvas">
    <svg class="plan" aria-label="图纸说明">
      <g transform="translate(-1920 -103)">
        <path fill="none" stroke="#004a9c" d="M1920 142.500h26M1920 211.500h26M1920 280.500h26M1920 349.500h26M1920 418.500h26M1920 487.500h26M1920 556.500h261M1920 625.500h26M1920 694.500h26M1920 763.500h26M1920 832.500h26M1920 901.500h26M1920 970.500h261M2360 142.500h1064M2360 211.500h1064M2360 280.500h1064M2360 349.500h1064M2360 418.500h1064M2360 487.500h1064M2360 556.500h1064M2360 625.500h1064M2360 694.500h1064M2360 763.500h1064M2360 832.500h1064M2360 901.500h1064M2360 970.500h1064M1945.500 103v879M2360.500 103v500M3424.500 103v879M2181.500 103v500M3722.500 103v879"/>
        <path stroke="#444" d="M2181.500 603v379"/>
        <g class="spec">
          <text x="2371" y="108" class="n">1</text><text x="2395" y="104">无地砖防水楼面</text><text x="2629" y="108" class="n">(BⅠ</text><text x="2688" y="104">级 )</text>
          <text x="2356" y="176" class="n">1 ,</text><text x="2407" y="176" class="n">8</text><text x="2440" y="176" class="n">~10</text><text x="2513" y="172">厚防滑陶瓷地砖;</text>
          <text x="2356" y="246" class="n">2 ,</text><text x="2402" y="242">干混陶瓷砖粘结砂浆,</text><text x="2717" y="242">陶瓷墙地砖填缝剂填缝;</text>
          <text x="2356" y="315" class="n">3 ,</text><text x="2412" y="315" class="n">1.5</text><text x="2477" y="311">厚聚氨酯防水涂料,</text><text x="2759" y="311">四周上翻高度超过地面完成面</text><text x="3164" y="315" class="n">300mm</text><text x="3316" y="311">,</text><text x="3328" y="311">过门</text>
          <text x="2416" y="380">框向外延伸</text><text x="2576" y="384" class="n">200mm</text><text x="2728" y="380">,</text><text x="2740" y="380">浴缸、</text><text x="2841" y="380">淋浴间墙面分多遍涂刷</text><text x="3174" y="384" class="n">1.5</text><text x="3220" y="380">厚聚氨酯防水</text>
          <text x="2416" y="449">涂膜,</text><text x="2499" y="449">刷至楼板底;</text>
          <text x="2356" y="522" class="n">4 ,</text><text x="2412" y="522" class="n">40</text><text x="2468" y="518">厚</text><text x="2501" y="522" class="n">C20</text><text x="2576" y="518">细石混凝土,</text><text x="2765" y="518">内配</text><text x="2833" y="522" class="n">Φ3@50*50</text><text x="3028" y="518">钢筋网片,</text><text x="3178" y="518">抹平压光;</text>
          <text x="2356" y="591" class="n">5 ,</text><text x="2402" y="587">轻质材料填充;</text>
          <text x="2356" y="660" class="n">6 ,</text><text x="2403" y="656">安装管道及侧排口疏水层,</text><text x="2783" y="656">侧排口</text><text x="2883" y="660" class="n">200mm</text><text x="3038" y="656">范围内设置卵石疏水层并用</text>
          <text x="2416" y="725">无纺布包裹,</text><text x="2600" y="725">以防防水砂浆等堵塞侧排口;</text>
          <text x="2356" y="798" class="n">7 ,</text><text x="2412" y="798" class="n">20</text><text x="2467" y="794">厚</text><text x="2501" y="798" class="n">1 : 3</text><text x="2575" y="794">水泥砂浆保护层;</text>
          <text x="2356" y="867" class="n">8 ,</text><text x="2412" y="867" class="n">1.5</text><text x="2477" y="863">厚聚氨酯防水涂料,</text><text x="2759" y="863">面撒黄沙,</text><text x="2908" y="863">与墙面防潮层衔接,</text><text x="3187" y="863">过门框向外</text>
          <text x="2416" y="932">延伸</text><text x="2482" y="936" class="n">200mm</text><text x="2636" y="932">;</text><text x="2649" y="932">(防水层翻起高度根据各功能对应上翻)</text>
          <text x="2467" y="994">厚</text><text x="2575" y="994">水泥砂浆找平层</text>
          <text x="2195" y="545">楼/</text><text x="2254" y="545">地面三</text>
          <text x="1957" y="775">卫生间、</text><text x="2088" y="775">洗衣间</text>
          <text x="3434" y="800">用于卫生间</text><text x="3442" y="853">洗衣房、阳台</text>
        </g>
        <g fill="none" stroke="#ff1d0d" stroke-width="3"><rect x="2331" y="271" width="1099" height="213" rx="2"/><rect x="2314" y="824" width="1061" height="145" rx="2"/></g>
      </g>
    </svg>
    <div class="float">
      <svg class="i w" viewBox="0 0 16 16"><rect x="1" y="1" width="5" height="6" rx="2"/><rect x="9" y="1" width="5" height="6" rx="2"/><rect x="1" y="9" width="5" height="6" rx="2"/><rect x="9" y="9" width="5" height="6" rx="2"/></svg>
      <label for="kind">标注分类</label><span class="kind"><i></i><select id="kind"><option>未分类</option></select></span><i class="bar"></i>
      <svg class="i w" viewBox="0 0 16 16"><path d="M8 2H1v13h12V9M6 11l9-9M4 7l2 4"/></svg><svg class="i w" viewBox="0 0 16 16"><path d="M8 1v14M1 8h14M6 3l2-2 2 2M6 13l2 2 2-2M3 6 1 8l2 2M13 6l2 2-2 2"/></svg><svg class="i w" viewBox="0 0 16 16"><path d="M5 1h9v11H5zM5 4H2v11h8v-3"/></svg><svg class="i w" viewBox="0 0 16 16"><path d="M12 5V1H2v10h4M6 7h9v8H6z"/></svg>
    </div>
    <div class="ime"><svg class="sogou" viewBox="0 0 30 30"><path fill="#f4511e" d="M2 6 24 0l4 22-4 5-20 3z"/><path fill="none" stroke="#fff" stroke-width="4" d="M21 9C6 6 6 14 15 15s7 9-8 6"/></svg><b>中</b><b>°,</b><svg class="i ib" viewBox="0 0 16 16"><rect class="fb" x="6" y="1" width="4" height="8" rx="2"/><path d="M3 7c0 6 10 6 10 0M8 12v3"/></svg><svg class="i ib" viewBox="0 0 16 16"><path d="M1 2h14v12H1zM3 5h10M3 8h10M5 11h6"/></svg><svg class="i" viewBox="0 0 16 16"><path fill="#8a6be8" stroke="none" d="M5 2 0 5l2 4 2-1v7h8V8l2 1 2-4-5-3c-1 3-5 3-6 0z"/><circle cx="13" cy="3" r="2" fill="#f4511e" stroke="none"/></svg><svg class="i" viewBox="0 0 16 16"><path class="fb" d="M2 2h5v5H2zM9 2h5v5H9zM2 9h5v5H2zM9 9h5v5H9z"/></svg><svg class="i" viewBox="0 0 16 16"><circle cx="8" cy="8" r="7" fill="#ffd9c2" stroke="#e66"/><path fill="#e2571e" stroke="none" d="M4 7h8v4H4z"/></svg></div>
  </div>
  <div class="sheets"><a href="#" class="on">模型</a><a href="#">布局1</a><a href="#">布局2</a></div>
  <footer class="cstat"><span class="xy">x = 608163&nbsp; y = 416643</span><span class="gap"></span><span class="grow">模型中的标注比例:1</span><span class="ic"><svg class="i go" viewBox="0 0 16 16"><path d="M3 1h10v14H3zM6 5h4M5 9h5v4"/></svg></span><span class="ic"><svg class="i go" viewBox="0 0 16 16"><path d="M2 4h9v11H2zM5 4V1h9v11h-3M6 8h3"/></svg></span><span class="ic"><svg class="i" viewBox="0 0 16 16"><rect x="0" y="0" width="16" height="16" rx="3" fill="#1590dc" stroke="none"/><path stroke="#fff" d="M3 11V5h3v3H3M8 8h2M12 5v6"/></svg></span><span class="ic"><svg class="i ib" viewBox="0 0 16 16"><path d="M1 1h14M1 1v10h14M3 14h12"/></svg></span></footer>
  <footer class="taskbar">
    <div class="apps"><a href="#" class="idle"><svg><use href="#t1"/></svg></a><a href="#"><svg><use href="#t2"/></svg></a><a href="#" class="idle"><svg><use href="#t3"/></svg></a><a href="#"><svg><use href="#t4"/></svg></a><a href="#"><svg><use href="#t5"/></svg></a><a href="#"><svg><use href="#t6"/></svg></a><a href="#" class="on"><svg><use href="#t7"/></svg></a><a href="#"><svg><use href="#t8"/></svg></a><a href="#"><svg><use href="#t9"/></svg></a><a href="#"><svg><use href="#t10"/></svg></a><a href="#"><svg><use href="#t11"/></svg></a></div>
    <time class="far">16:04<br>2024/10/29</time>
  </footer>
</section>
</main>
</body>
</html>
```
FILE: styles.css
```css
* { box-sizing: border-box; }
body { margin: 0; font: 12px/16px "Noto Sans CJK SC", "Noto Sans", sans-serif; color: #303030; background: #fff; }
button, input, select { font: inherit; color: inherit; background: none; border: 0; margin: 0; padding: 0; }
a { color: inherit; text-decoration: none; }
h1, h2 { margin: 0; font: inherit; white-space: nowrap; }
ul { list-style: none; margin: 0; padding: 0; }
b { font-weight: 400; }
.sprite { position: absolute; width: 0; height: 0; }

/* icons */
.i { width: 16px; height: 16px; flex: none; fill: none; stroke: #4b5468; stroke-width: 1.2; display: block; }
.b { stroke: #1a73e8; }
.r { stroke: #e02020; }
.lb { fill: #cfe3fb; }
.fb { fill: #1a73e8; stroke: none; }
.fd { fill: #4b5468; stroke: none; }
.c { fill: none; stroke: #2aa5e4; stroke-width: 1.5; }
.fc { fill: #129fe8; }
.o { fill: none; stroke: #b9912f; stroke-width: 1.5; }
.g { fill: none; stroke: #aaa; stroke-width: 1.5; }
.lite { stroke: #a0a0a0; }
.w { stroke: #eee; }
.ib { stroke: #1a73e8; }
.go { stroke: #c79a2c; }
.tiny { font-size: 6px; fill: #1a73e8; stroke: none; font-weight: 700; }
.off { color: #b4b4b4; }
.i.off, .off .i { stroke: #bbb; }
.off .i .b, .i.off .b { stroke: #bbb; }
.drop::after { content: ""; border: 3px solid transparent; border-top: 5px solid #777; border-bottom: 0; margin-left: 5px; flex: none; }
.drop.off::after { border-top-color: #bbb; }
.up { width: 9px; height: 9px; border: solid #444; border-width: 1px 0 0 1px; transform: rotate(45deg); margin-top: 5px; }

.screens { display: grid; grid-template-columns: 1fr 1fr; height: 100vh; }
.screen { display: flex; flex-direction: column; min-width: 0; min-height: 0; overflow: hidden; }

/* title and menu */
.titlebar { display: flex; align-items: center; height: 26px; flex: none; }
.quick { display: flex; align-items: center; gap: 18px; width: 570px; flex: none; padding-left: 4px; }
.quick .big { width: 20px; height: 20px; }
.quick .drop { display: flex; align-items: center; margin-right: -8px; }
.winctl { margin-left: auto; display: flex; gap: 24px; padding-right: 12px; color: #555; }
.winctl button { width: 12px; }
.menu { display: flex; height: 30px; padding: 6px 8px 0 24px; gap: 26px; font-size: 13px; line-height: 24px; border-bottom: 1px solid #e4e4e4; flex: none; }
.menu .on { color: #1a73e8; font-weight: 700; position: relative; }
.menu .on::after { content: ""; position: absolute; left: -3px; right: -3px; bottom: 0; height: 2px; background: #1a73e8; }
.account { margin-left: auto; display: flex; align-items: center; gap: 9px; font-size: 12px; }
.ask { display: flex; align-items: center; width: 320px; height: 18px; border: 1px solid #ddd; border-radius: 2px; padding-right: 4px; }
.ask input { flex: 1; min-width: 0; color: #000; }
.avatar { width: 17px; height: 17px; background: radial-gradient(circle at 50% 35%, #e8f4ff 4px, #9cd0fa 5px); margin-left: -3px; }
.user { margin-left: -8px; margin-right: 16px; }
.account .drop { display: flex; align-items: center; font-size: 15px; }
.account .drop::after { margin-left: 2px; }

/* ribbon */
.ribbon { display: flex; height: 100px; flex: none; border-bottom: 1px solid #ccc; padding-top: 4px; }
.grp { display: flex; flex-direction: column; border-right: 1px solid #ddd; height: 92px; }
.cols { display: grid; flex: 1; }
.col { display: flex; flex-direction: column; align-items: flex-start; }
.col button { display: flex; align-items: center; gap: 3px; height: 24px; white-space: nowrap; }
.col button.drop::after { margin-left: 2px; }
.grp h2 { height: 20px; line-height: 16px; display: flex; justify-content: center; align-items: center; }
.large { display: flex; flex-direction: column; align-items: center; align-self: start; gap: 8px; padding-top: 3px; white-space: nowrap; }
.cursor { width: 20px; height: 27px; }
.smart { width: 32px; height: 32px; }
.g6 .large { padding: 0; gap: 6px; }
.g6 .large::after { margin: 0; }
.g1 { width: 233px; } .g1 .cols { grid-template-columns: 24px 98px 1fr; padding-left: 16px; } .g1 .col:nth-child(2) { margin: 0 -14px 0 14px; } .g1 .col:nth-child(3) { margin-left: 13px; }
.g2 { width: 202px; } .g2 .cols { grid-template-columns: 79px 1fr; padding-left: 10px; }
.g3 { width: 276px; } .g3 .cols { grid-template-columns: 66px 110px 1fr; padding-left: 12px; }
.g4 { width: 238px; } .g4 .cols { grid-template-columns: 54px 55px 62px 1fr; padding-left: 11px; }
.g5 { width: 69px; } .g5 .cols { grid-template-columns: 33px 1fr; padding-left: 8px; }
.g6 { width: 78px; } .g6 .cols { grid-template-columns: 48px; padding-left: 8px; }
.g7 { width: 115px; } .g7 .cols { padding-left: 6px; }
.g7 .col button { padding: 0 5px 0 3px; height: 22px; margin-bottom: 2px; border-radius: 3px; }
.g7 .sel { background: #bfd8f2; }

.pickers { display: flex; height: 32px; background: #f0f0f0; flex: none; }
.pickers label { width: 100px; display: flex; align-items: center; border-right: 1px solid #d2d2d2; padding: 0 4px; }
.pickers select { appearance: none; flex: 1; min-width: 0; }
.pickers .drop::after { margin-left: 0; border-top-color: #555; }

/* work area */
.work { flex: 1; min-height: 0; display: grid; grid-template-columns: 130px 280px minmax(0, 1fr) 289px; gap: 4px; }
.panel { border: 1px solid #d0d0d0; border-top: 0; background: #fff; min-height: 0; overflow: hidden; display: flex; flex-direction: column; position: relative; }
.phead { display: flex; align-items: center; height: 29px; background: #ededef; flex: none; padding-left: 6px; }
.grip { width: 7px; height: 14px; background: radial-gradient(circle, #888 1px, transparent 1px) 0 0 / 4px 4px; }
.phead b { margin-left: 13px; }
.x { margin-left: auto; width: 26px; font-size: 18px; color: #888; }
.tab { height: 29px; line-height: 29px; padding: 0 10px; }
.grip + .tab { margin-left: 11px; }
.tab.on { background: #fff; color: #1a73e8; }
.navlist { flex: 1; min-height: 0; overflow: hidden; display: flex; flex-direction: column; }
.navlist a { height: 28px; line-height: 28px; padding-left: 21px; flex: none; }
.navlist .cat { height: 42px; display: flex; align-items: center; gap: 14px; padding-left: 11px; background: #f5f6f8; margin-right: 12px; position: relative; }
.cat svg { width: 24px; height: 24px; }
.navlist .on { background: #e9eaee; color: #3b7be0; }
.cur { color: #0a84ff; }
.new::after { content: ""; position: absolute; left: 35px; top: 5px; width: 6px; height: 6px; border-radius: 3px; background: #f00; }
.vbar { position: absolute; right: 4px; top: 286px; width: 4px; height: 321px; border-radius: 2px; background: #e6e6e6; }
.stack { display: flex; flex-direction: column; gap: 4px; min-height: 0; }
.list { flex: 4 1 0; }
.props { flex: 3 1 0; border-top: 1px solid #d0d0d0; }
.tools { display: flex; gap: 9px; padding: 7px 9px 0 10px; }
.tools button { width: 32px; height: 26px; background: #f4f4f5; border-radius: 3px; display: grid; place-items: center; }
.tools .split { width: 46px; display: flex; align-items: center; padding-left: 8px; }
.tools .split::after { margin-left: 12px; }
.tools .more { width: 26px; border: 1px solid #ddd; margin-left: auto; font-size: 10px; }
.find { display: flex; align-items: center; margin: 7px 8px 10px; height: 26px; background: #f4f4f4; border-radius: 13px; padding: 0 9px 0 12px; }
.find input { flex: 1; min-width: 0; }
.list ul { margin: 0 3px 0 13px; overflow: hidden; }
.list li { height: 22px; line-height: 22px; margin-bottom: 2px; padding-left: 3px; white-space: nowrap; overflow: hidden; border-radius: 2px; }
.list .sel { background: #c0d8f0; }
.hbar { position: absolute; left: 16px; bottom: 5px; width: 186px; height: 4px; border-radius: 2px; background: #e8e8e8; }
.props table { border-collapse: collapse; width: 100%; table-layout: fixed; }
.props th { font-weight: 400; background: #ececee; height: 25px; padding: 0; border-right: 1px solid #d4d4d4; border-bottom: 1px solid #d4d4d4; }
.props .w1 { width: 101px; } .props .w3 { width: 42px; }
.props td { height: 25px; padding: 0 0 0 15px; white-space: nowrap; }
.props td:nth-child(2) { padding: 0 1px 0 0; }
.props td:nth-child(3) { padding: 0; }
.props td input { width: 100%; height: 21px; border: 1px solid #d8d8d8; padding: 0 2px; display: block; }
.props .blue { color: #1a5cf0; } .props .blue input { color: #303030; }
.props .sec td { background: #ececec; padding-left: 10px; border-top: 1px solid #fff; }
.sec td::before { content: ""; display: inline-block; border: 3px solid transparent; border-left: 5px solid #888; border-right: 0; margin-right: 6px; }
.sec.open td::before { border: 3px solid transparent; border-top: 5px solid #888; border-bottom: 0; }
.dot { display: block; width: 8px; height: 8px; margin: auto; border-radius: 4px; border: 1px solid #aaa; background: #e6e6e6; }

/* drawings */
.canvas { position: relative; min-width: 0; min-height: 0; overflow: hidden; background: #000; }
.plan { position: absolute; width: 100%; height: 100%; }
.plan text { dominant-baseline: central; }
.thin { fill: #fff; font-weight: 100; }
.t32 { font-size: 32px; } .t24 { font-size: 24px; } .t20 { font-size: 20px; } .t16 { font-size: 16px; } .t12 { font-size: 12px; }
.dim { fill: #888; } .dark { fill: #6a5560; }
.dims { fill: #fff; font-size: 42px; }
.axis { fill: #fff; font-size: 16px; text-anchor: middle; }
.spec { fill: #fff; font-size: 33px; font-weight: 300; }
.spec .n { font-size: 28px; }
.flap { position: absolute; top: 376px; width: 16px; height: 61px; background: #484848; color: #aaa; font-size: 16px; }
.flap.left { left: 0; clip-path: polygon(0 0, 100% 8%, 100% 92%, 0 100%); }
.flap.right { right: 0; clip-path: polygon(100% 0, 0 8%, 0 92%, 100% 100%); }
.views { position: absolute; right: 0; top: 0; width: 33px; height: 246px; background: #fff; border: 1px solid #ccc; border-radius: 0 0 3px 3px; display: flex; flex-direction: column; align-items: center; gap: 9px; padding-top: 13px; }
.views .i { width: 20px; height: 20px; }
.tri { border: 4px solid transparent; border-top: 5px solid #4b5468; border-bottom: 0; margin: -1px 0; }
.views hr { width: 24px; margin: -2px 0; border: 0; border-top: 1px solid #555; }

/* display settings */
.dtabs { display: flex; gap: 3px; padding: 4px 2px 0; border-bottom: 1px solid #ccc; flex: none; }
.dtabs button { height: 22px; padding: 0 6px; background: #dadada; border-radius: 3px 3px 0 0; color: #555; }
.dtabs .on { background: #fff; border: 1px solid #bbb; border-bottom: 0; color: #1a73e8; }
.treebox { margin: 3px 2px 0 3px; padding-right: 12px; border: 1px solid #ccc; flex: none; position: relative; }
.treebox::after { content: ""; position: absolute; right: 4px; top: 12px; width: 4px; height: 144px; border-radius: 2px; background: #e8e8e8; }
.tree { border-collapse: collapse; width: 100%; table-layout: fixed; }
.tree th { height: 20px; padding: 0; font-weight: 400; border-right: 1px solid #ddd; }
.tree .w { width: 63px; }
.tree th:nth-child(2) { background: #7cb5f8; color: #fff; font-weight: 700; }
.tree td { height: 21px; padding: 0; line-height: 16px; border: solid #ddd; border-width: 1px 1px 0 0; text-align: center; }
.tree td:first-child { text-align: left; white-space: nowrap; padding-left: 41px; position: relative; background: linear-gradient(#ddd, #ddd) 8px 0 / 1px 100% no-repeat, linear-gradient(#ddd, #ddd) 18px 0 / 1px 100% no-repeat, linear-gradient(#ddd, #ddd) 18px 50% / 16px 1px no-repeat; }
.tree .last td:first-child { background-size: 1px 100%, 1px 50%, 16px 1px; }
.tree .l1 td:first-child { padding-left: 31px; background: linear-gradient(#ddd, #ddd) 8px 0 / 1px 100% no-repeat; }
.tree .l0 td:first-child { padding-left: 21px; background: none; }
.l0 td:first-child::before, .l1 td:first-child::before { content: "−"; position: absolute; left: 2px; top: 4px; width: 13px; height: 12px; line-height: 9px; border: 1px solid #888; border-radius: 2px; text-align: center; background: #fff; }
.l1 td:first-child::before { left: 12px; }
.tree .focus { outline: 2px solid #808080; outline-offset: -2px; }
.tree input { appearance: none; display: block; margin: auto; width: 14px; height: 14px; border: 1px solid #888; border-radius: 2px; background: #fff; position: relative; }
.tree input:checked { background: #2a7de1; border-color: #2a7de1; }
.tree input:checked::after { content: ""; position: absolute; left: 3px; top: 2px; width: 6px; height: 3px; border: solid #fff; border-width: 0 0 2px 2px; transform: rotate(-45deg); }
.tree input.part::after { content: ""; position: absolute; inset: 1px; background: #99c9ff; border: 1px solid #2a7de1; }
.tree input:disabled { background: #eee; border-color: #aaa; }
.foot { padding: 6px 8px; text-align: right; }
.foot button { height: 26px; padding: 0 8px; border: 1px solid #bbb; border-radius: 3px; }

/* status */
.status { display: flex; align-items: center; height: 31px; flex: none; background: #fcfcfc; }
.status > .i { margin: 0 4px 0 16px; }
.facts { display: flex; justify-content: space-between; width: 410px; padding-left: 4px; }
.snap { display: flex; gap: 5px; margin-left: 42px; }
.snap button { width: 25px; height: 25px; border: 1px solid #999; border-radius: 3px; display: flex; align-items: center; justify-content: center; }
.snap .wide { width: 35px; } .snap .on { background: #cfe3fb; border-color: #3b82e0; }
.snap .drop::after { margin-left: 4px; }
.taskbar { display: flex; height: 48px; flex: none; border-top: 1px solid #b0b6c0; background: linear-gradient(90deg, #dbdff9 0, #d6e0fa 10%, #cdeefc 21%, #cfe6f8 28%, #d5dde6 36%, #cfe6f4 44%, #e2e4f5 58%, #d8dcee 68%, #c6f2f8 76%, #c8f5f8 88%, #c8e4fb 100%); }
.apps { display: flex; gap: 6px; padding: 4px 0 0 13px; }
.apps a { width: 38px; height: 39px; display: grid; justify-items: center; align-content: start; padding-top: 7px; gap: 4px; border-radius: 4px; }
.apps svg { width: 24px; height: 24px; fill: none; }
.apps a::after { content: ""; width: 6px; height: 3px; border-radius: 2px; background: #858c99; }
.apps .idle::after { background: none; }
.apps .on { background: rgba(255, 255, 255, .6); }
.apps .on::after { width: 16px; background: #0a74d4; }
.tray { display: flex; align-items: center; gap: 20px; margin-left: auto; }
.tray .sg { margin: 0 4px; stroke: none; }
.tray .i:last-child { margin-left: -14px; }
.tray .i { width: 18px; height: 18px; }
time { text-align: right; padding: 7px 0 0 16px; line-height: 16px; }
.bell { margin: 16px 12px 0 10px; }
time.far { margin-left: auto; padding-right: 22px; color: #555; }

/* drawing viewer */
.cad .titlebar { height: 23px; background: #f3f3f3; color: #949494; padding-left: 2px; gap: 7px; }
.capp { width: 15px; height: 16px; }
.cad .winctl { gap: 33px; padding-right: 18px; }
.cbar { display: flex; height: 54px; flex: none; background: linear-gradient(#f0efe9, #ebe5e1); color: #000; }
.cbar button { padding: 6px 11px 0 10px; display: flex; flex-direction: column; align-items: center; gap: 5px; line-height: 16px; white-space: nowrap; flex: none; }
.cbar button:first-child { padding-left: 11px; }
.cbar svg { width: 24px; height: 24px; }
.cbar i { width: 1px; margin: 5px 3px 5px 2px; background: #d8d4d0; flex: none; }
.cbar .off { color: #999; } .cbar .gold { color: #c8962a; }
.files { display: flex; align-items: flex-end; height: 26px; flex: none; background: #f0f0f0; padding: 0 8px 1px 2px; color: #000; }
.files a { width: 158px; height: 23px; line-height: 21px; border: 1px solid #888; display: flex; justify-content: space-between; padding: 0 8px 0 10px; }
.files span { white-space: nowrap; }
.files a + a { border-left: 0; }
.files .on { height: 25px; font-weight: 700; background: linear-gradient(#dce8f6, #b4c9e4); border-color: #4a7ebb; padding-left: 2px; }
.fmenu { margin: 0 0 8px auto; width: 12px; border-top: 2px solid #000; height: 10px; }
.fmenu::after { content: ""; display: block; margin-top: 2px; border: 6px solid transparent; border-top: 7px solid #000; border-bottom: 0; }
.cad .canvas { flex: 1; }
.float { position: absolute; left: 766px; bottom: 16px; height: 37px; width: 387px; display: flex; align-items: center; justify-content: space-between; padding: 0 12px 0 10px; background: #666; border: 1px solid #8a8a8a; color: #fff; }
.kind { display: flex; align-items: center; width: 149px; height: 27px; border: 1px solid #000; padding: 0 5px; gap: 4px; }
.kind i { width: 13px; height: 13px; background: #f05a00; border: 1px solid #000; }
.kind select { flex: 1; appearance: none; }
.kind::after { content: ""; border: 4px solid transparent; border-top: 7px solid #fff; border-bottom: 0; }
.bar { width: 1px; height: 20px; background: #888; }
.ime { position: absolute; right: 0; bottom: 40px; width: 202px; height: 26px; display: flex; align-items: center; justify-content: space-between; padding-right: 6px; background: linear-gradient(90deg, transparent 14px, #fff 14px); color: #1a6fd8; }
.ime b { font-weight: 700; font-size: 14px; }
.sogou { width: 32px; height: 32px; }
.sheets { display: flex; height: 21px; flex: none; background: #f0f0f0; border-bottom: 2px solid #000; padding-left: 2px; gap: 1px; color: #000; }
.sheets a { width: 65px; height: 18px; text-align: center; line-height: 18px; background: #fff; clip-path: polygon(0 0, 100% 0, 92% 100%, 8% 100%); }
.sheets .on { background: #000; color: #fff; }
.cstat { display: flex; align-items: center; height: 29px; flex: none; background: linear-gradient(#f0efe9, #ebe5e1); color: #000; }
.cstat span { height: 25px; line-height: 25px; border-right: 1px solid #d4d0cc; }
.xy { width: 325px; padding-left: 7px; } .gap { width: 166px; }
.cstat .grow { flex: 1; padding-left: 5px; }
.cstat .ic { width: 34px; display: grid; place-items: center; }
.cstat .ic:last-child { border: 0; }
```
